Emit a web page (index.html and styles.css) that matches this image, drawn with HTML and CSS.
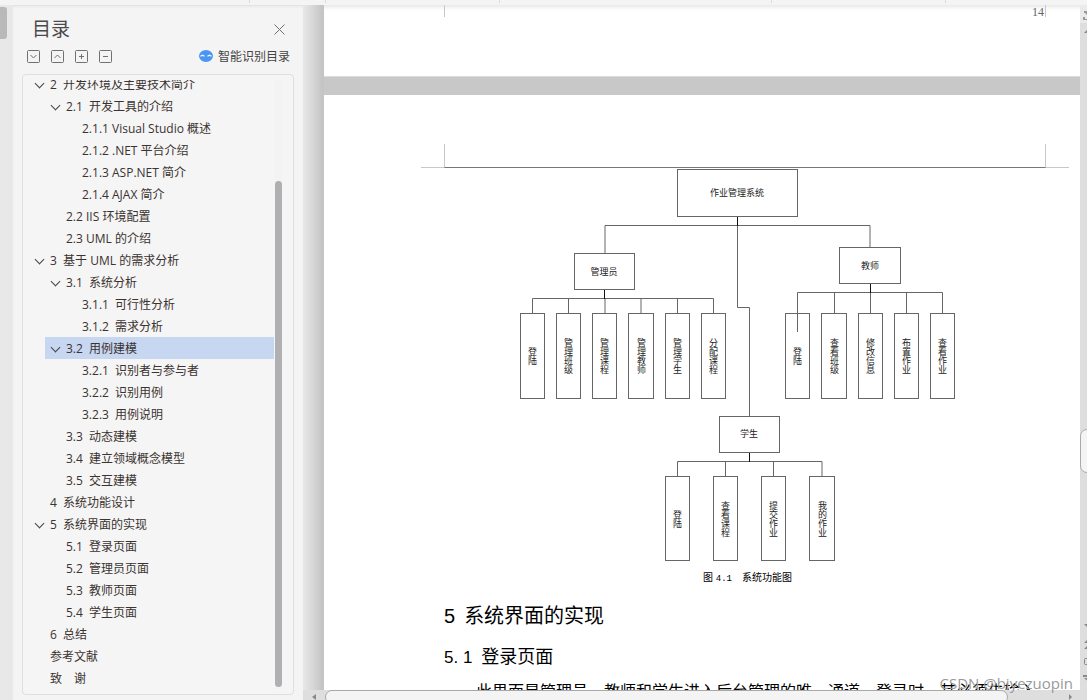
FILE: index.html
```html
<!DOCTYPE html>
<html lang="zh-CN">
<head>
    <meta charset="utf-8">
    <title>目录</title>
    <link rel="stylesheet" href="styles.css">
</head>
<body>
<div class="toolbar">
    <span class="group g1"></span>
    <span class="group g2"></span>
    <span class="group g3"></span>
    <span class="group g4"></span>
    <span class="group g5"></span>
</div>
<div class="main">
    <div class="rail"><div class="railTab"></div></div>

    <aside class="sidebar">
        <header class="sideHead">
            <h1>目录</h1>
            <button type="button" class="iconBtn" aria-label="关闭">
                <svg width="11" height="11" viewBox="0 0 11 11"><path d="M.5 .5l10 10M10.5 .5l-10 10"/></svg>
            </button>
        </header>
        <div class="sideTools">
            <button type="button" class="iconBtn" aria-label="展开">
                <svg width="13" height="13" viewBox="0 0 13 13"><rect x=".5" y=".5" width="12" height="12" rx="1"/><path d="M3.500 5l3 3 3-3"/></svg>
            </button>
            <button type="button" class="iconBtn" aria-label="收起">
                <svg width="13" height="13" viewBox="0 0 13 13"><rect x=".5" y=".5" width="12" height="12" rx="1"/><path d="M3.500 8l3-3 3 3"/></svg>
            </button>
            <button type="button" class="iconBtn" aria-label="增加级别">
                <svg width="13" height="13" viewBox="0 0 13 13"><rect x=".5" y=".5" width="12" height="12" rx="1"/><path d="M4 6.500h5M6.500 4v5"/></svg>
            </button>
            <button type="button" class="iconBtn" aria-label="减少级别">
                <svg width="13" height="13" viewBox="0 0 13 13"><rect x=".5" y=".5" width="12" height="12" rx="1"/><path d="M4 6.500h5"/></svg>
            </button>
            <button type="button" class="smart">
                <svg width="14" height="12" viewBox="0 0 14 12"><ellipse cx="7" cy="6" rx="7" ry="6" fill="#4a96f2"/><path d="M1.500 6.200l2-1 2 1M8.500 6.200l2-1 2 1" fill="none" stroke="#fff" stroke-width="1.200"/></svg>
                智能识别目录
            </button>
        </div>
        <div class="outline">
            <div class="outlineView">
                <ul class="tree">
                    <li>
                        <div class="row"><button type="button" class="toggle" aria-label="折叠"></button><a href="#">2  开发环境及主要技术简介</a></div>
                        <ul>
                            <li>
                                <div class="row"><button type="button" class="toggle" aria-label="折叠"></button><a href="#">2.1  开发工具的介绍</a></div>
                                <ul>
                                    <li><div class="row leaf"><a href="#">2.1.1 Visual Studio 概述</a></div></li>
                                    <li><div class="row leaf"><a href="#">2.1.2 .NET 平台介绍</a></div></li>
                                    <li><div class="row leaf"><a href="#">2.1.3 ASP.NET 简介</a></div></li>
                                    <li><div class="row leaf"><a href="#">2.1.4 AJAX 简介</a></div></li>
                                </ul>
                            </li>
                            <li><div class="row leaf"><a href="#">2.2 IIS 环境配置</a></div></li>
                            <li><div class="row leaf"><a href="#">2.3 UML 的介绍</a></div></li>
                        </ul>
                    </li>
                    <li>
                        <div class="row"><button type="button" class="toggle" aria-label="折叠"></button><a href="#">3  基于 UML 的需求分析</a></div>
                        <ul>
                            <li>
                                <div class="row"><button type="button" class="toggle" aria-label="折叠"></button><a href="#">3.1  系统分析</a></div>
                                <ul>
                                    <li><div class="row leaf"><a href="#">3.1.1  可行性分析</a></div></li>
                                    <li><div class="row leaf"><a href="#">3.1.2  需求分析</a></div></li>
                                </ul>
                            </li>
                            <li>
                                <div class="row selected"><button type="button" class="toggle" aria-label="折叠"></button><a href="#">3.2  用例建模</a></div>
                                <ul>
                                    <li><div class="row leaf"><a href="#">3.2.1  识别者与参与者</a></div></li>
                                    <li><div class="row leaf"><a href="#">3.2.2  识别用例</a></div></li>
                                    <li><div class="row leaf"><a href="#">3.2.3  用例说明</a></div></li>
                                </ul>
                            </li>
                            <li><div class="row leaf"><a href="#">3.3  动态建模</a></div></li>
                            <li><div class="row leaf"><a href="#">3.4  建立领域概念模型</a></div></li>
                            <li><div class="row leaf"><a href="#">3.5  交互建模</a></div></li>
                        </ul>
                    </li>
                    <li><div class="row leaf"><a href="#">4  系统功能设计</a></div></li>
                    <li>
                        <div class="row"><button type="button" class="toggle" aria-label="折叠"></button><a href="#sec5">5  系统界面的实现</a></div>
                        <ul>
                            <li><div class="row leaf"><a href="#sec51">5.1  登录页面</a></div></li>
                            <li><div class="row leaf"><a href="#">5.2  管理员页面</a></div></li>
                            <li><div class="row leaf"><a href="#">5.3  教师页面</a></div></li>
                            <li><div class="row leaf"><a href="#">5.4  学生页面</a></div></li>
                        </ul>
                    </li>
                    <li><div class="row leaf"><a href="#">6  总结</a></div></li>
                    <li><div class="row leaf"><a href="#">参考文献</a></div></li>
                    <li><div class="row leaf"><a href="#">致　谢</a></div></li>
                </ul>
                <div class="treeTrack"><div class="treeThumb"></div></div>
            </div>
        </div>
    </aside>

    <div class="viewer">
        <div class="canvas">
            <section class="page prevPage">
                <div class="footer"><span>14</span></div>
            </section>
            <section class="page">
                <div class="headRule"><i></i><b></b><i></i></div>
                <div class="content">
                    <figure>
                        <svg class="diagram" width="452" height="394" viewBox="519 168 452 394">
                            <g class="boxes">
                                <rect x="677.5" y="169.5" width="120" height="47"/>
                                <rect x="574.5" y="253.5" width="60" height="36"/>
                                <rect x="839.5" y="247.500" width="61" height="36"/>
                                <rect x="719.5" y="416.5" width="60" height="36"/>
                                <!-- 管理员 -->
                                <rect x="520.5" y="313.5" width="24" height="85"/>
                                <rect x="556.5" y="313.5" width="24" height="85"/>
                                <rect x="592.5" y="313.5" width="24" height="85"/>
                                <rect x="628.5" y="313.5" width="25" height="85"/>
                                <rect x="665.5" y="313.5" width="24" height="85"/>
                                <rect x="701.5" y="313.5" width="24" height="85"/>
                                <!-- 教师 -->
                                <rect x="785.5" y="313.5" width="24" height="85"/>
                                <rect x="821.5" y="313.5" width="25" height="85"/>
                                <rect x="858.5" y="313.5" width="24" height="85"/>
                                <rect x="894.5" y="313.5" width="24" height="85"/>
                                <rect x="930.5" y="313.5" width="24" height="85"/>
                                <!-- 学生 -->
                                <rect x="665.5" y="476.5" width="24" height="84"/>
                                <rect x="713.5" y="476.5" width="24" height="84"/>
                                <rect x="761.5" y="476.5" width="24" height="84"/>
                                <rect x="809.5" y="476.5" width="25" height="84"/>
                            </g>
                            <g class="links">
                                <path d="M605 253.500V225.500H870V247.500"/>
                                <path d="M737.500 225.500V307.500H749.500V416.500"/>
                                <path d="M532.500 313.500V298.500H713.500V313.500M568.500 298.500v15M605 298.500v15M641 298.500v15M677.500 298.500v15"/>
                                <path d="M797.500 332V292.500H942.500V313.500M834.500 292.500v21M870.500 292.500v21M906.500 292.500v21"/>
                                <path d="M677.500 476.500V461.500H822V476.500M725.500 461.500v15M773.500 461.500v15"/>
                                <path class="stem" d="M737.500 217v9M604.500 290v9M870.500 284v9M749.500 453v9"/>
                            </g>
                            <g class="names">
                                <text x="737" y="196">作业管理系统</text>
                                <text x="604" y="275">管理员</text>
                                <text x="870" y="269">教师</text>
                                <text x="749" y="437">学生</text>
                            </g>
                            <g class="names vertical">
                                <text x="532" y="356">登陆</text>
                                <text x="568" y="356">管理班级</text>
                                <text x="604" y="356">管理课程</text>
                                <text x="641" y="356">管理教师</text>
                                <text x="677" y="356">管理学生</text>
                                <text x="713" y="356">分配课程</text>
                                <text x="797" y="356">登陆</text>
                                <text x="834" y="356">查看班级</text>
                                <text x="870" y="356">修改信息</text>
                                <text x="906" y="356">布置作业</text>
                                <text x="942" y="356">查看作业</text>
                                <text x="677" y="519">登陆</text>
                                <text x="725" y="519">查看课程</text>
                                <text x="773" y="519">提交作业</text>
                                <text x="822" y="519">我的作业</text>
                            </g>
                        </svg>
                        <figcaption>图 <span>4.1</span>　系统功能图</figcaption>
                    </figure>
                    <h2 id="sec5"><span>5</span>系统界面的实现</h2>
                    <h3 id="sec51"><span>5. 1</span>登录页面</h3>
                    <p>此界面是管理员、教师和学生进入后台管理的唯一通道，登录时，其必须先输入</p>
                </div>
            </section>
        </div>
        <div class="vbar">
            <div class="vTop"><svg width="10" height="18" viewBox="0 0 10 18"><path d="M4 6h6v2H8l2 3H8L5 8H4zM3 12h2v2h3v-3h2v4H3z" fill="#999"/></svg></div>
            <svg class="mark" width="10" height="8" viewBox="0 0 10 8"><path d="M4 6l5-5 5 5z"/></svg>
            <div class="vThumb"></div>
            <svg class="mark" width="10" height="64" viewBox="0 0 10 64"><path d="M4 2h10l-5 5zM4 21l5-5v5zM4 27l5-5v5zM4 56h5v4zM3 53h7v2H3z"/><rect x="4.500" y="36.500" width="8" height="6" rx="1" fill="none" stroke="#888"/></svg>
        </div>
        <div class="hbar">
            <svg class="mark" width="22" height="10" viewBox="0 0 22 10"><path d="M13 4v6l-4-3z"/></svg>
            <div class="hThumb"></div>
            <svg class="mark" width="79" height="10" viewBox="0 0 79 10"><path d="M61 4v6l3-3z"/></svg>
        </div>
        <div class="watermark">CSDN @biyezuopin</div>
    </div>
</div>
</body>
</html>
```

FILE: styles.css
```css
*{
    box-sizing: border-box;
}
body{
    margin: 0;
    height: 100vh;
    display: flex;
    flex-direction: column;
    overflow: hidden;
    background: #f4f4f4;
    color: #3a3330;
    font: 12px "Open Sans", "Noto Sans CJK SC", sans-serif;
}
button{
    border: 0;
    padding: 0;
    background: none;
    font: inherit;
    color: inherit;
}
ul{
    list-style: none;
    margin: 0;
    padding: 0;
}
.toolbar{
    height: 5px;
    flex: none;
    display: flex;
    background: #f4f4f4;
}
.group{
    height: 3px;
    border-right: 1px solid #dcdcdc;
}
.g1{ width: 23%; }
.g2{ width: 7%; }
.g3{ width: 16%; }
.g4{ width: 25%; }
.g5{ width: 16%; }
.main{
    flex: 1;
    min-height: 0;
    display: flex;
}

/* left panel */
.rail{
    width: 13px;
    padding-top: 2px;
    background: #e8e8e8;
}
.railTab{
    width: 7px;
    height: 32px;
    border-radius: 0 3px 3px 0;
    background: #b9b9b9;
}
.sidebar{
    width: 290px;
    flex: none;
    padding: 9px 9px 5px 9px;
    display: flex;
    flex-direction: column;
    box-shadow: inset 0 3px 3px -2px #dcdcdc;
}
.sideHead{
    display: flex;
    justify-content: space-between;
    align-items: center;
    height: 30px;
    padding: 0 9px 0 10px;
}
h1{
    margin: 0;
    font-size: 19px;
    font-weight: normal;
    line-height: 30px;
    color: #4a4a4a;
}
.iconBtn{
    display: flex;
}
.iconBtn svg{
    fill: none;
    stroke: #707070;
}
.sideTools{
    display: flex;
    align-items: center;
    gap: 11px;
    height: 24px;
    padding: 0 4px 0 5px;
}
.smart{
    display: flex;
    align-items: center;
    gap: 5px;
    margin-left: auto;
    color: #444;
}
.outline{
    flex: 1;
    min-height: 0;
    margin-top: 6px;
    padding: 5px 11px 5px 6px;
    display: flex;
    border: 1px solid #dfdfdf;
    border-radius: 4px;
    background: #f5f5f5;
}
.outlineView{
    flex: 1;
    display: flex;
    overflow: hidden;
}
.tree{
    flex: 1;
    margin-top: -7px;
}
.tree ul{
    padding-left: 16px;
}
.row{
    display: flex;
    align-items: center;
    height: 22px;
}
.leaf{
    padding-left: 21px;
}
.row a{
    color: inherit;
    text-decoration: none;
    white-space: pre;
}
.selected{
    background: #c7d6f1;
}
.toggle{
    width: 21px;
    height: 22px;
    display: flex;
    align-items: center;
    justify-content: center;
}
.toggle::before{
    content: "";
    width: 6px;
    height: 6px;
    margin-bottom: 2px;
    border: solid #444;
    border-width: 0 1px 1px 0;
    transform: rotate(45deg);
}
.treeTrack{
    width: 7px;
    margin-left: 1px;
    padding-top: 101px;
    display: flex;
    background: #f3f3f3;
}
.treeThumb{
    flex: 1;
    margin-bottom: 2px;
    border-radius: 4px;
    background: #b0b0b2;
}

/* document */
.viewer{
    position: relative;
    flex: 1;
    min-width: 0;
    display: grid;
    grid-template-columns: 1fr 7px;
    grid-template-rows: 1fr 10px;
}
.canvas{
    min-width: 0;
    overflow: hidden;
    padding-left: 21px;
    background: linear-gradient(to right, #e8e8e8, #dadada 8px, #c3c3c3 20px, #c8c8c8 21px);
}
.page{
    background: #fff;
    color: #000;
}
.prevPage{
    height: 72px;
    margin-bottom: 18px;
    border-bottom: 1px solid #dcdcdc;
    box-shadow: inset 0 5px 4px -3px #e4e4e4;
}
.footer{
    height: 12px;
    margin: 0 34px 0 120px;
    padding-right: 1px;
    border: solid #c8c8c8;
    border-width: 0 1px;
    text-align: right;
    color: #666;
    font: 12px/14px "Liberation Serif", serif;
}
.headRule{
    display: flex;
    align-items: flex-end;
    height: 73px;
    padding: 0 11px 0 97px;
}
.headRule i{
    width: 23px;
    border-bottom: 1px solid #c8c8c8;
}
.headRule b{
    flex: 1;
    height: 24px;
    border: 1px solid #c8c8c8;
    border-top: 0;
    border-bottom-color: #777;
}
.content{
    margin: 0 34px 0 120px;
    font-family: "Liberation Sans", "Noto Sans CJK SC", sans-serif;
}
figure{
    margin: 0;
    text-align: center;
}
.diagram{
    display: block;
    margin: 0 auto;
}
.boxes rect{
    fill: none;
    stroke: #666;
}
.links path{
    fill: none;
    stroke: #666;
}
.links .stem{
    stroke: #111;
}
.names text{
    font-size: 9px;
    text-anchor: middle;
    fill: #222;
}
.vertical text{
    writing-mode: vertical-rl;
}
figcaption{
    padding: 8px 0 0 5px;
    font-size: 10px;
    line-height: 16px;
}
figcaption span{
    font-family: "Liberation Mono", monospace;
    font-size: 9px;
}
h2, h3{
    display: flex;
    align-items: baseline;
    gap: 9px;
    margin: 0;
    font-weight: normal;
}
h2{
    padding-top: 14px;
    font-size: 20px;
    line-height: 30px;
}
h3{
    padding-top: 12px;
    font-size: 18px;
    line-height: 28px;
}
h3 span{
    font-size: 17px;
}
p{
    margin: 0;
    padding-top: 8px;
    font-size: 16px;
    line-height: 24px;
    text-indent: 32px;
    white-space: nowrap;
}

/* scroll bars */
.vbar{
    display: flex;
    flex-direction: column;
    overflow: hidden;
    background: #dedede;
}
.vTop{
    height: 18px;
    overflow: hidden;
    background: #eaeaea;
}
.mark{
    display: block;
    flex: none;
    fill: #888;
}
.vbar .mark:nth-child(2){
    margin-top: 4px;
}
.vThumb{
    width: 14px;
    height: 44px;
    flex: none;
    margin: 394px 0 auto;
    border: 1px solid #aaa;
    border-radius: 7px;
    background: #f4f4f4;
}
.vbar .mark:last-child{
    margin-bottom: 4px;
}
.hbar{
    grid-column: 1 / 3;
    display: flex;
    overflow: hidden;
    background: #dedede;
}
.hThumb{
    flex: 1;
    height: 14px;
    border: 1px solid #a8a8a8;
    border-radius: 7px;
    background: #f4f4f4;
}
.watermark{
    position: absolute;
    right: 14px;
    bottom: 6px;
    color: #999;
    font-size: 15px;
    line-height: 22px;
}
```
